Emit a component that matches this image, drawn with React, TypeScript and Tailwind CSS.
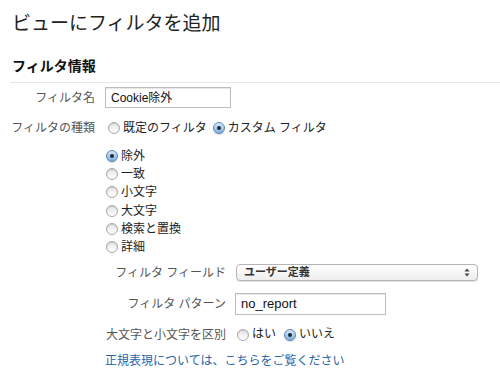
import React from 'react';

function Radio({ checked }: { checked?: boolean }) {
  return checked ? (
    <span className="relative inline-flex w-[12px] h-[12px] shrink-0 rounded-full border border-[#5a86b8] bg-gradient-to-b from-[#d6e8f8] to-[#7fb0e0] items-center justify-center shadow-[0_1px_1px_rgba(0,0,0,0.15)]">
      <span className="w-[4px] h-[4px] rounded-full bg-[#1c2b3a]" />
    </span>
  ) : (
    <span className="inline-block w-[12px] h-[12px] shrink-0 rounded-full border border-[#a8a8a8] bg-gradient-to-b from-[#e4e4e4] to-white shadow-[inset_0_1px_1px_rgba(0,0,0,0.12)]" />
  );
}

const filterTypes = [
  { name: '除外', checked: true },
  { name: '一致' },
  { name: '小文字' },
  { name: '大文字' },
  { name: '検索と置換' },
  { name: '詳細' },
];

export default function App() {
  return (
    <div
      className="w-[500px] h-[378px] overflow-hidden bg-white text-[12px] text-[#222]"
      style={{ fontFamily: '"Liberation Sans", "Noto Sans CJK JP", sans-serif' }}
    >
      <h1 className="pl-[12px] pt-[12px] text-[19px] leading-[24px] text-[#222]">ビューにフィルタを追加</h1>

      <h2 className="mt-[21px] pl-[12px] text-[14px] leading-[18px] font-bold text-[#111]">フィルタ情報</h2>
      <div className="mt-[7px] ml-[10px] h-px bg-[#e6e6e6]" />

      {/* filter name */}
      <div className="mt-[4px] flex items-center h-[21px]">
        <span className="w-[95px] text-right text-[#555] leading-[18px]">フィルタ名</span>
        <div className="ml-[10px] w-[126px] h-[21px] border border-[#bdbdbd] shadow-[inset_0_1px_1px_rgba(0,0,0,0.1)] px-[5px] flex items-center text-[12px] text-[#111]">
          Cookie除外
        </div>
      </div>

      {/* filter kind */}
      <div className="mt-[11px] flex items-center h-[18px]">
        <span className="w-[95px] text-right text-[#555]">フィルタの種類</span>
        <span className="ml-[13px] flex items-center gap-[3px]">
          <Radio />
          <span>既定のフィルタ</span>
        </span>
        <span className="ml-[6px] flex items-center gap-[3px]">
          <Radio checked />
          <span>カスタム フィルタ</span>
        </span>
      </div>

      <div className="mt-[10px] pl-[106px] flex flex-col">
        {filterTypes.map((t) => (
          <div key={t.name} className="h-[18.2px] flex items-center gap-[3px]">
            <Radio checked={t.checked} />
            <span>{t.name}</span>
          </div>
        ))}
      </div>

      <div className="pl-[105px]">
        {/* filter field */}
        <div className="mt-[8px] flex items-center h-[17px]">
          <span className="w-[121px] text-right text-[#555]">フィルタ フィールド</span>
          <div className="ml-[10px] w-[242px] h-[17px] rounded-[4px] border border-[#b5b5b5] bg-gradient-to-b from-white to-[#ededed] shadow-[0_1px_1px_rgba(0,0,0,0.12)] flex items-center justify-between pl-[7px] pr-[7px]">
            <span className="text-[11px] font-semibold text-[#333] leading-none">ユーザー定義</span>
            <svg width="6" height="9" viewBox="0 0 6 9">
              <path d="M3 0.5 L5.5 3.5 H0.5 Z" fill="#444" />
              <path d="M3 8.5 L5.5 5.5 H0.5 Z" fill="#444" />
            </svg>
          </div>
        </div>

        {/* filter pattern */}
        <div className="mt-[12px] flex items-center h-[22px]">
          <span className="w-[121px] text-right text-[#555]">フィルタ パターン</span>
          <div className="ml-[9px] w-[151px] h-[22px] border border-[#bdbdbd] shadow-[inset_0_1px_1px_rgba(0,0,0,0.1)] px-[5px] flex items-center text-[13px] text-[#111]">
            no_report
          </div>
        </div>

        {/* case sensitive */}
        <div className="mt-[11px] flex items-center h-[18px]">
          <span className="w-[121px] text-right text-[#555]">大文字と小文字を区別</span>
          <span className="ml-[11px] flex items-center gap-[3px]">
            <Radio />
            <span className="-mt-[3px]">はい</span>
          </span>
          <span className="ml-[8px] flex items-center gap-[3px]">
            <Radio checked />
            <span className="-mt-[3px]">いいえ</span>
          </span>
        </div>

        <div className="mt-[8px] h-[18px] flex items-center">
          <a href="#" className="text-[#2a63a8]">正規表現については、こちらをご覧ください</a>
        </div>
      </div>
    </div>
  );
}
